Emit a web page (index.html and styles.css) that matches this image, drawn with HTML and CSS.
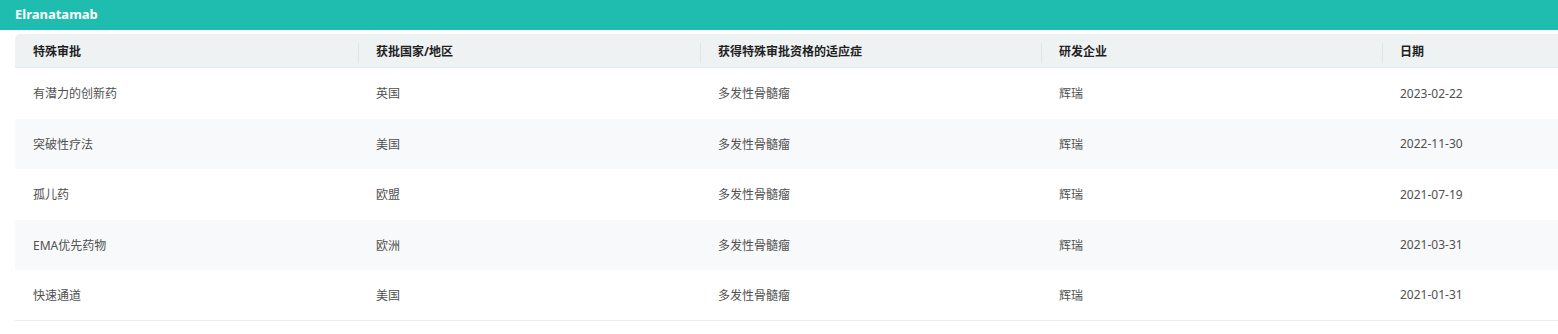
FILE: index.html
```html
<!DOCTYPE html>
<html lang="zh">
<head>
<meta charset="utf-8">
<title>Elranatamab</title>
<link rel="stylesheet" href="styles.css">
</head>
<body>
<div class="page">
  <div class="titlebar">Elranatamab</div>
  <div class="table-wrap">
    <table class="grid">
      <colgroup>
        <col class="c1"><col class="c2"><col class="c3"><col class="c4"><col class="c5">
      </colgroup>
      <thead>
        <tr>
          <th class="first">特殊审批</th>
          <th>获批国家/地区</th>
          <th>获得特殊审批资格的适应症</th>
          <th>研发企业</th>
          <th>日期</th>
        </tr>
      </thead>
      <tbody>
        <tr><td>有潜力的创新药</td><td>英国</td><td>多发性骨髓瘤</td><td>辉瑞</td><td>2023-02-22</td></tr>
        <tr class="alt"><td>突破性疗法</td><td>美国</td><td>多发性骨髓瘤</td><td>辉瑞</td><td>2022-11-30</td></tr>
        <tr><td>孤儿药</td><td>欧盟</td><td>多发性骨髓瘤</td><td>辉瑞</td><td>2021-07-19</td></tr>
        <tr class="alt"><td>EMA优先药物</td><td>欧洲</td><td>多发性骨髓瘤</td><td>辉瑞</td><td>2021-03-31</td></tr>
        <tr class="last"><td>快速通道</td><td>美国</td><td>多发性骨髓瘤</td><td>辉瑞</td><td>2021-01-31</td></tr>
      </tbody>
    </table>
  </div>
</div>
</body>
</html>
```

FILE: styles.css
```css
html, body {
  margin: 0;
  padding: 0;
  background: #ffffff;
  overflow: hidden;
}

.page {
  width: 1558px;
  font-family: "Noto Sans", "Noto Sans CJK SC", sans-serif;
}

.titlebar {
  height: 30px;
  line-height: 28px;
  padding-left: 15px;
  background: #1fbdaf;
  color: #ffffff;
  font-size: 13px;
  font-weight: 700;
}

.table-wrap {
  margin-top: 4px;
  margin-left: 15px;
  width: 1543px;
  overflow: hidden;
}

.grid {
  width: 1710px;
  table-layout: fixed;
  border-collapse: separate;
  border-spacing: 0;
  font-size: 12px;
}

.c1 { width: 343px; }
.c2 { width: 342px; }
.c3 { width: 341px; }
.c4 { width: 341px; }
.c5 { width: 343px; }

.grid thead th {
  position: relative;
  height: 34px;
  padding: 0 0 0 18px;
  box-sizing: border-box;
  background: #eef2f3;
  border-bottom: 1px solid #e4e9ef;
  color: #1f1f1f;
  font-weight: 700;
  text-align: left;
  vertical-align: middle;
}

.grid thead th.first {
  border-top-left-radius: 5px;
}

.grid thead th + th::before {
  content: "";
  position: absolute;
  left: 0;
  top: 9px;
  height: 20px;
  width: 1px;
  background: #dde6e6;
}

.grid tbody td {
  height: 50.5px;
  padding: 0 0 0 18px;
  box-sizing: border-box;
  color: #505050;
  text-align: left;
  vertical-align: middle;
  white-space: nowrap;
}

.grid tbody tr.alt td {
  background: #f8f9fa;
}

.grid tbody tr.last td {
  border-bottom: 1px solid #ebedf2;
}
```
